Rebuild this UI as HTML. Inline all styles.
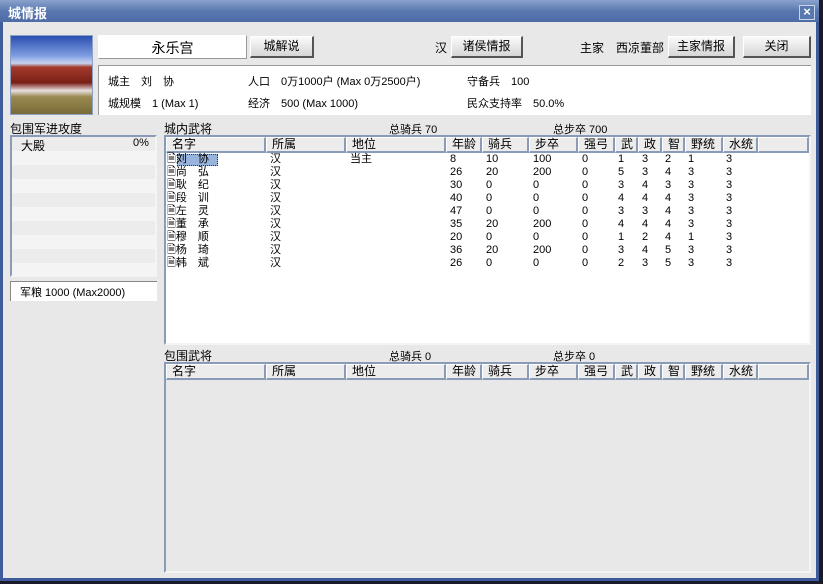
<!DOCTYPE html>
<html><head><meta charset="utf-8"><style>
*{margin:0;padding:0;box-sizing:border-box}
body{width:823px;height:584px;background:#1a1a2a;position:relative;overflow:hidden;font-family:"Liberation Sans","WenQuanYi Zen Hei","Noto Sans CJK SC",sans-serif;font-size:11px;color:#000}
.a{position:absolute;white-space:nowrap}
#win{position:absolute;left:0;top:0;width:819px;height:581px;background:#3d5c99}
#title{position:absolute;left:0;top:0;width:819px;height:22px;background:linear-gradient(#8aa2cc,#5a78b0 50%,#4d6ba6)}
#body{position:absolute;left:3px;top:22px;width:813px;height:556px;background:#e8e8e8}
.btn{position:absolute;height:22px;background:linear-gradient(#fafafa,#d6d6d6);border:1px solid #fff;border-right:2px solid #555;border-bottom:2px solid #555;text-align:center;line-height:19px;font-size:12px}
.white{position:absolute;background:#fff}
.lb{position:absolute;border:2px solid #8a9bb8;border-right-color:#f4f4f4;border-bottom-color:#f4f4f4}
.hd{position:absolute;top:0;height:16px;background:#ececec;border:1px solid #fff;border-right:2px solid #8a9bb8;border-bottom:2px solid #8a9bb8;padding-left:5px;line-height:13px;font-size:12px}
.row{position:absolute;left:0;height:13px;line-height:13px;font-size:11px}
.row span{position:absolute}
</style></head><body>
<div id="win"></div>
<div id="title"></div>
<div class="a" style="left:8px;top:3px;color:#fff;font-weight:bold;font-size:13px">城情报</div>
<div class="a" style="left:799px;top:5px;width:16px;height:15px;border:1px solid #c8d4ea;background:#5a78b0;color:#fff;font-weight:bold;text-align:center;line-height:12px;font-size:13px">×</div>
<div id="body"></div>

<div class="a" style="left:10px;top:35px;width:83px;height:80px;border:1px solid #8aa0c8;background:linear-gradient(#2a4fb0 0%,#7d9be0 25%,#c8d4f0 35%,#a23a2a 40%,#7a2018 60%,#e8e0e0 70%,#9a8a50 78%,#7a6a38 100%)"></div>
<div class="white" style="left:98px;top:35px;width:149px;height:24px;border:1px solid #999;border-top-color:#fff;border-left-color:#fff"></div>
<div class="a" style="left:98px;top:38px;width:149px;text-align:center;font-size:14px">永乐宫</div>
<div class="btn" style="left:250px;top:36px;width:64px">城解说</div>
<div class="a" style="left:435px;top:39px;font-size:12px">汉</div>
<div class="btn" style="left:451px;top:36px;width:72px">诸侯情报</div>
<div class="a" style="left:580px;top:39px;font-size:12px">主家</div>
<div class="a" style="left:616px;top:39px;font-size:12px">西凉董部</div>
<div class="btn" style="left:668px;top:36px;width:67px">主家情报</div>
<div class="btn" style="left:743px;top:36px;width:68px">关闭</div>

<div class="white" style="left:98px;top:65px;width:713px;height:50px;border:1px solid #999;border-right:none;border-bottom:none"></div>
<div class="a" style="left:108px;top:73px">城主　刘　协</div>
<div class="a" style="left:248px;top:73px">人口　0万1000户 (Max 0万2500户)</div>
<div class="a" style="left:467px;top:73px">守备兵　100</div>
<div class="a" style="left:108px;top:95px">城规模　1 (Max 1)</div>
<div class="a" style="left:248px;top:95px">经济　500 (Max 1000)</div>
<div class="a" style="left:467px;top:95px">民众支持率　50.0%</div>

<div class="a" style="left:10px;top:120px;font-size:12px">包围军进攻度</div>
<div class="lb" style="left:10px;top:135px;width:147px;height:142px;background:repeating-linear-gradient(#ececec 0 14px,#f4f4f4 14px 28px)"></div>
<div class="a" style="left:21px;top:137px;font-size:12px">大殿</div>
<div class="a" style="left:133px;top:137px">0%</div>
<div class="white" style="left:10px;top:281px;width:147px;height:20px;border-top:1px solid #888;border-left:1px solid #888"></div>
<div class="a" style="left:20px;top:284px">军粮 1000 (Max2000)</div>

<div class="a" style="left:164px;top:120px;font-size:12px">城内武将</div>
<div class="a" style="left:389px;top:121px">总骑兵 70</div>
<div class="a" style="left:553px;top:121px">总步卒 700</div>
<div class="lb" style="left:164px;top:135px;width:647px;height:210px;background:#fff">
<div class="hd" style="left:0;width:100px">名字</div><div class="hd" style="left:100px;width:80px">所属</div><div class="hd" style="left:180px;width:100px">地位</div><div class="hd" style="left:280px;width:36px">年龄</div><div class="hd" style="left:316px;width:47px">骑兵</div><div class="hd" style="left:363px;width:49px">步卒</div><div class="hd" style="left:412px;width:37px">强弓</div><div class="hd" style="left:449px;width:23px">武</div><div class="hd" style="left:472px;width:24px">政</div><div class="hd" style="left:496px;width:23px">智</div><div class="hd" style="left:519px;width:38px">野统</div><div class="hd" style="left:557px;width:35px">水统</div><div class="hd" style="left:592px;width:51px"></div>
<div class="a" style="left:11px;top:17px;width:41px;height:12px;background:#98b4dc;border:1px dotted #333"></div>
</div>

<div class="a" style="left:164px;top:347px;font-size:12px">包围武将</div>
<div class="a" style="left:389px;top:348px">总骑兵 0</div>
<div class="a" style="left:553px;top:348px">总步卒 0</div>
<div class="lb" style="left:164px;top:362px;width:647px;height:211px;background:#e8e8e8">
<div class="hd" style="left:0;width:100px">名字</div><div class="hd" style="left:100px;width:80px">所属</div><div class="hd" style="left:180px;width:100px">地位</div><div class="hd" style="left:280px;width:36px">年龄</div><div class="hd" style="left:316px;width:47px">骑兵</div><div class="hd" style="left:363px;width:49px">步卒</div><div class="hd" style="left:412px;width:37px">强弓</div><div class="hd" style="left:449px;width:23px">武</div><div class="hd" style="left:472px;width:24px">政</div><div class="hd" style="left:496px;width:23px">智</div><div class="hd" style="left:519px;width:38px">野统</div><div class="hd" style="left:557px;width:35px">水统</div><div class="hd" style="left:592px;width:51px"></div>
</div>
<div class="a" style="left:164px;top:153px;width:600px;height:120px">
<div class="row" style="top:0"><span style="left:3px">🗎刘　协</span><span style="left:106px">汉</span><span style="left:186px">当主</span><span style="left:286px">8</span><span style="left:322px">10</span><span style="left:369px">100</span><span style="left:418px">0</span><span style="left:454px">1</span><span style="left:478px">3</span><span style="left:501px">2</span><span style="left:524px">1</span><span style="left:562px">3</span></div>
<div class="row" style="top:13px"><span style="left:3px">🗎尚　弘</span><span style="left:106px">汉</span><span style="left:286px">26</span><span style="left:322px">20</span><span style="left:369px">200</span><span style="left:418px">0</span><span style="left:454px">5</span><span style="left:478px">3</span><span style="left:501px">4</span><span style="left:524px">3</span><span style="left:562px">3</span></div>
<div class="row" style="top:26px"><span style="left:3px">🗎耿　纪</span><span style="left:106px">汉</span><span style="left:286px">30</span><span style="left:322px">0</span><span style="left:369px">0</span><span style="left:418px">0</span><span style="left:454px">3</span><span style="left:478px">4</span><span style="left:501px">3</span><span style="left:524px">3</span><span style="left:562px">3</span></div>
<div class="row" style="top:39px"><span style="left:3px">🗎段　训</span><span style="left:106px">汉</span><span style="left:286px">40</span><span style="left:322px">0</span><span style="left:369px">0</span><span style="left:418px">0</span><span style="left:454px">4</span><span style="left:478px">4</span><span style="left:501px">4</span><span style="left:524px">3</span><span style="left:562px">3</span></div>
<div class="row" style="top:52px"><span style="left:3px">🗎左　灵</span><span style="left:106px">汉</span><span style="left:286px">47</span><span style="left:322px">0</span><span style="left:369px">0</span><span style="left:418px">0</span><span style="left:454px">3</span><span style="left:478px">3</span><span style="left:501px">4</span><span style="left:524px">3</span><span style="left:562px">3</span></div>
<div class="row" style="top:65px"><span style="left:3px">🗎董　承</span><span style="left:106px">汉</span><span style="left:286px">35</span><span style="left:322px">20</span><span style="left:369px">200</span><span style="left:418px">0</span><span style="left:454px">4</span><span style="left:478px">4</span><span style="left:501px">4</span><span style="left:524px">3</span><span style="left:562px">3</span></div>
<div class="row" style="top:78px"><span style="left:3px">🗎穆　顺</span><span style="left:106px">汉</span><span style="left:286px">20</span><span style="left:322px">0</span><span style="left:369px">0</span><span style="left:418px">0</span><span style="left:454px">1</span><span style="left:478px">2</span><span style="left:501px">4</span><span style="left:524px">1</span><span style="left:562px">3</span></div>
<div class="row" style="top:91px"><span style="left:3px">🗎杨　琦</span><span style="left:106px">汉</span><span style="left:286px">36</span><span style="left:322px">20</span><span style="left:369px">200</span><span style="left:418px">0</span><span style="left:454px">3</span><span style="left:478px">4</span><span style="left:501px">5</span><span style="left:524px">3</span><span style="left:562px">3</span></div>
<div class="row" style="top:104px"><span style="left:3px">🗎韩　斌</span><span style="left:106px">汉</span><span style="left:286px">26</span><span style="left:322px">0</span><span style="left:369px">0</span><span style="left:418px">0</span><span style="left:454px">2</span><span style="left:478px">3</span><span style="left:501px">5</span><span style="left:524px">3</span><span style="left:562px">3</span></div>
</div>
</body></html>
